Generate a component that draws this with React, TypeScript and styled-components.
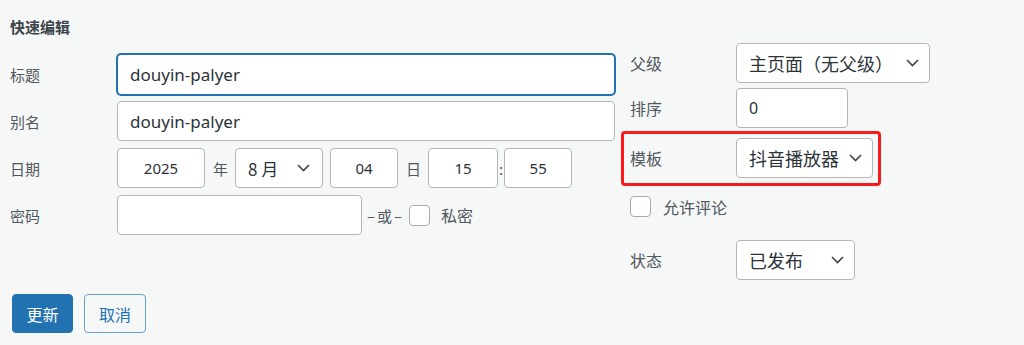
import React from "react";
import styled, { createGlobalStyle } from "styled-components";

const GlobalStyle = createGlobalStyle`
  body {
    margin: 0;
    background: #f6f7f7;
    font-family: "Noto Sans", "Noto Sans CJK SC", sans-serif;
  }
`;

const Page = styled.div`
  padding: 17px 10px 0;
  display: flex;
  flex-direction: column;
`;

const Columns = styled.div`
  display: flex;
  align-items: flex-start;
`;

const LeftCol = styled.div`
  width: 605px;
  display: flex;
  flex-direction: column;
  gap: 7px;
`;

const RightCol = styled.div`
  margin-left: 15px;
  padding-top: 26px;
  display: flex;
  flex-direction: column;
  align-items: flex-start;
`;

const Heading = styled.h4`
  margin: 0 0 10px;
  font-size: 15px;
  line-height: 20px;
  font-weight: 700;
  color: #3c434a;
  font-family: "Noto Sans CJK SC", sans-serif;
`;

const Row = styled.div<{ $mb?: number }>`
  display: flex;
  align-items: center;
  height: 40px;
  margin-bottom: ${(p) => p.$mb ?? 0}px;
`;

const Label = styled.span<{ $w: number; $size: number }>`
  width: ${(p) => p.$w}px;
  flex: none;
  font-size: ${(p) => p.$size}px;
  color: #50575e;
  font-family: "Noto Sans CJK SC", sans-serif;
`;

const TextInput = styled.input<{ $w?: number; $focus?: boolean; $size?: number }>`
  box-sizing: border-box;
  width: ${(p) => (p.$w ? `${p.$w}px` : "100%")};
  height: ${(p) => (p.$focus ? 41 : 40)}px;
  padding: 0 12px;
  border: 1px solid ${(p) => (p.$focus ? "#2271b1" : "#b4b7ba")};
  box-shadow: ${(p) => (p.$focus ? "0 0 0 1px #2271b1" : "none")};
  border-radius: 4px;
  background: #fff;
  color: #2c3338;
  font-size: ${(p) => p.$size ?? 17}px;
  font-family: "Noto Sans", "Noto Sans CJK SC", sans-serif;
  outline: none;
`;

const DateInput = styled.input<{ $w: number; $ml?: number }>`
  box-sizing: border-box;
  width: ${(p) => p.$w}px;
  height: 40px;
  margin-left: ${(p) => p.$ml ?? 0}px;
  padding: 0 4px;
  border: 1px solid #b4b7ba;
  border-radius: 4px;
  background: #fff;
  color: #2c3338;
  font-size: 15px;
  text-align: center;
  font-family: "Noto Sans", sans-serif;
  outline: none;
`;

const Sep = styled.span<{ $l: number; $r: number; $ls?: number }>`
  margin: 0 ${(p) => p.$r}px 0 ${(p) => p.$l}px;
  font-size: 15px;
  letter-spacing: ${(p) => p.$ls ?? 0}px;
  color: #50575e;
  font-family: "Noto Sans CJK SC", sans-serif;
`;

const SelectBox = styled.div<{ $w: number; $pad: number; $size?: number }>`
  box-sizing: border-box;
  width: ${(p) => p.$w}px;
  height: 40px;
  padding: 0 ${(p) => p.$pad}px 0 12px;
  border: 1px solid #b4b7ba;
  border-radius: 4px;
  background: #fff;
  display: flex;
  align-items: center;
  justify-content: space-between;
  color: #2c3338;
  font-size: ${(p) => p.$size ?? 18}px;
  font-family: "Noto Sans CJK SC", sans-serif;
  white-space: nowrap;
`;

const Chevron = styled.svg`
  width: 13px;
  height: 8px;
  flex: none;
`;

const CheckBox = styled.span`
  box-sizing: border-box;
  width: 21px;
  height: 21px;
  border: 1px solid #a7aaad;
  border-radius: 4px;
  background: #fff;
  flex: none;
`;

const CheckLabel = styled.span<{ $ml: number }>`
  margin-left: ${(p) => p.$ml}px;
  font-size: 16px;
  color: #50575e;
  font-family: "Noto Sans CJK SC", sans-serif;
`;

const Highlight = styled.div`
  position: relative;
  display: flex;
  align-items: center;
  height: 40px;
  margin-bottom: 18px;
  &::after {
    content: "";
    position: absolute;
    left: -9px;
    right: -8px;
    top: -7px;
    bottom: -8px;
    border: 3px solid #fb1a1a;
    border-radius: 4px;
    pointer-events: none;
  }
`;

const CheckRow = styled.div`
  display: flex;
  align-items: center;
  height: 21px;
  margin-bottom: 23px;
`;

const Footer = styled.div`
  margin-top: 14px;
  padding-left: 2px;
  display: flex;
  gap: 11px;
`;

const Button = styled.button<{ $primary?: boolean; $w: number }>`
  box-sizing: border-box;
  width: ${(p) => p.$w}px;
  height: 39px;
  border-radius: 4px;
  border: 1px solid ${(p) => (p.$primary ? "#2271b1" : "#6b9fd0")};
  background: ${(p) => (p.$primary ? "#2271b1" : "#f6f7f7")};
  color: ${(p) => (p.$primary ? "#fff" : "#2271b1")};
  font-size: 16px;
  font-family: "Noto Sans CJK SC", sans-serif;
  padding: 0;
`;

function Down() {
  return (
    <Chevron viewBox="0 0 13 8">
      <path d="M1 1l5.5 5.5L12 1" fill="none" stroke="#3c434a" strokeWidth="1.6" />
    </Chevron>
  );
}

export default function App() {
  return (
    <Page>
      <GlobalStyle />
      <Columns>
        <LeftCol>
          <Heading>快速编辑</Heading>
          <Row>
            <Label $w={107} $size={15}>标题</Label>
            <TextInput $focus defaultValue="douyin-palyer" />
          </Row>
          <Row>
            <Label $w={107} $size={15}>别名</Label>
            <TextInput defaultValue="douyin-palyer" />
          </Row>
          <Row>
            <Label $w={107} $size={15}>日期</Label>
            <DateInput $w={88} defaultValue="2025" />
            <Sep $l={8} $r={7}>年</Sep>
            <SelectBox $w={88} $pad={12} $size={17}>
              8 月
              <Down />
            </SelectBox>
            <DateInput $w={68} $ml={7} defaultValue="04" />
            <Sep $l={8} $r={7}>日</Sep>
            <DateInput $w={70} defaultValue="15" />
            <Sep $l={1} $r={1}>:</Sep>
            <DateInput $w={68} defaultValue="55" />
          </Row>
          <Row>
            <Label $w={107} $size={15}>密码</Label>
            <TextInput $w={245} />
            <Sep $l={5} $r={5} $ls={2}>–或–</Sep>
            <CheckBox />
            <CheckLabel $ml={11}>私密</CheckLabel>
          </Row>
        </LeftCol>
        <RightCol>
          <Row $mb={5}>
            <Label $w={106} $size={16}>父级</Label>
            <SelectBox $w={194} $pad={10}>
              主页面（无父级）
              <Down />
            </SelectBox>
          </Row>
          <Row $mb={10}>
            <Label $w={106} $size={16}>排序</Label>
            <TextInput $w={112} $size={16} defaultValue="0" />
          </Row>
          <Highlight>
            <Label $w={106} $size={16}>模板</Label>
            <SelectBox $w={137} $pad={10}>
              抖音播放器
              <Down />
            </SelectBox>
          </Highlight>
          <CheckRow>
            <CheckBox />
            <CheckLabel $ml={12}>允许评论</CheckLabel>
          </CheckRow>
          <Row>
            <Label $w={106} $size={16}>状态</Label>
            <SelectBox $w={119} $pad={10}>
              已发布
              <Down />
            </SelectBox>
          </Row>
        </RightCol>
      </Columns>
      <Footer>
        <Button $primary $w={61}>更新</Button>
        <Button $w={62}>取消</Button>
      </Footer>
    </Page>
  );
}
